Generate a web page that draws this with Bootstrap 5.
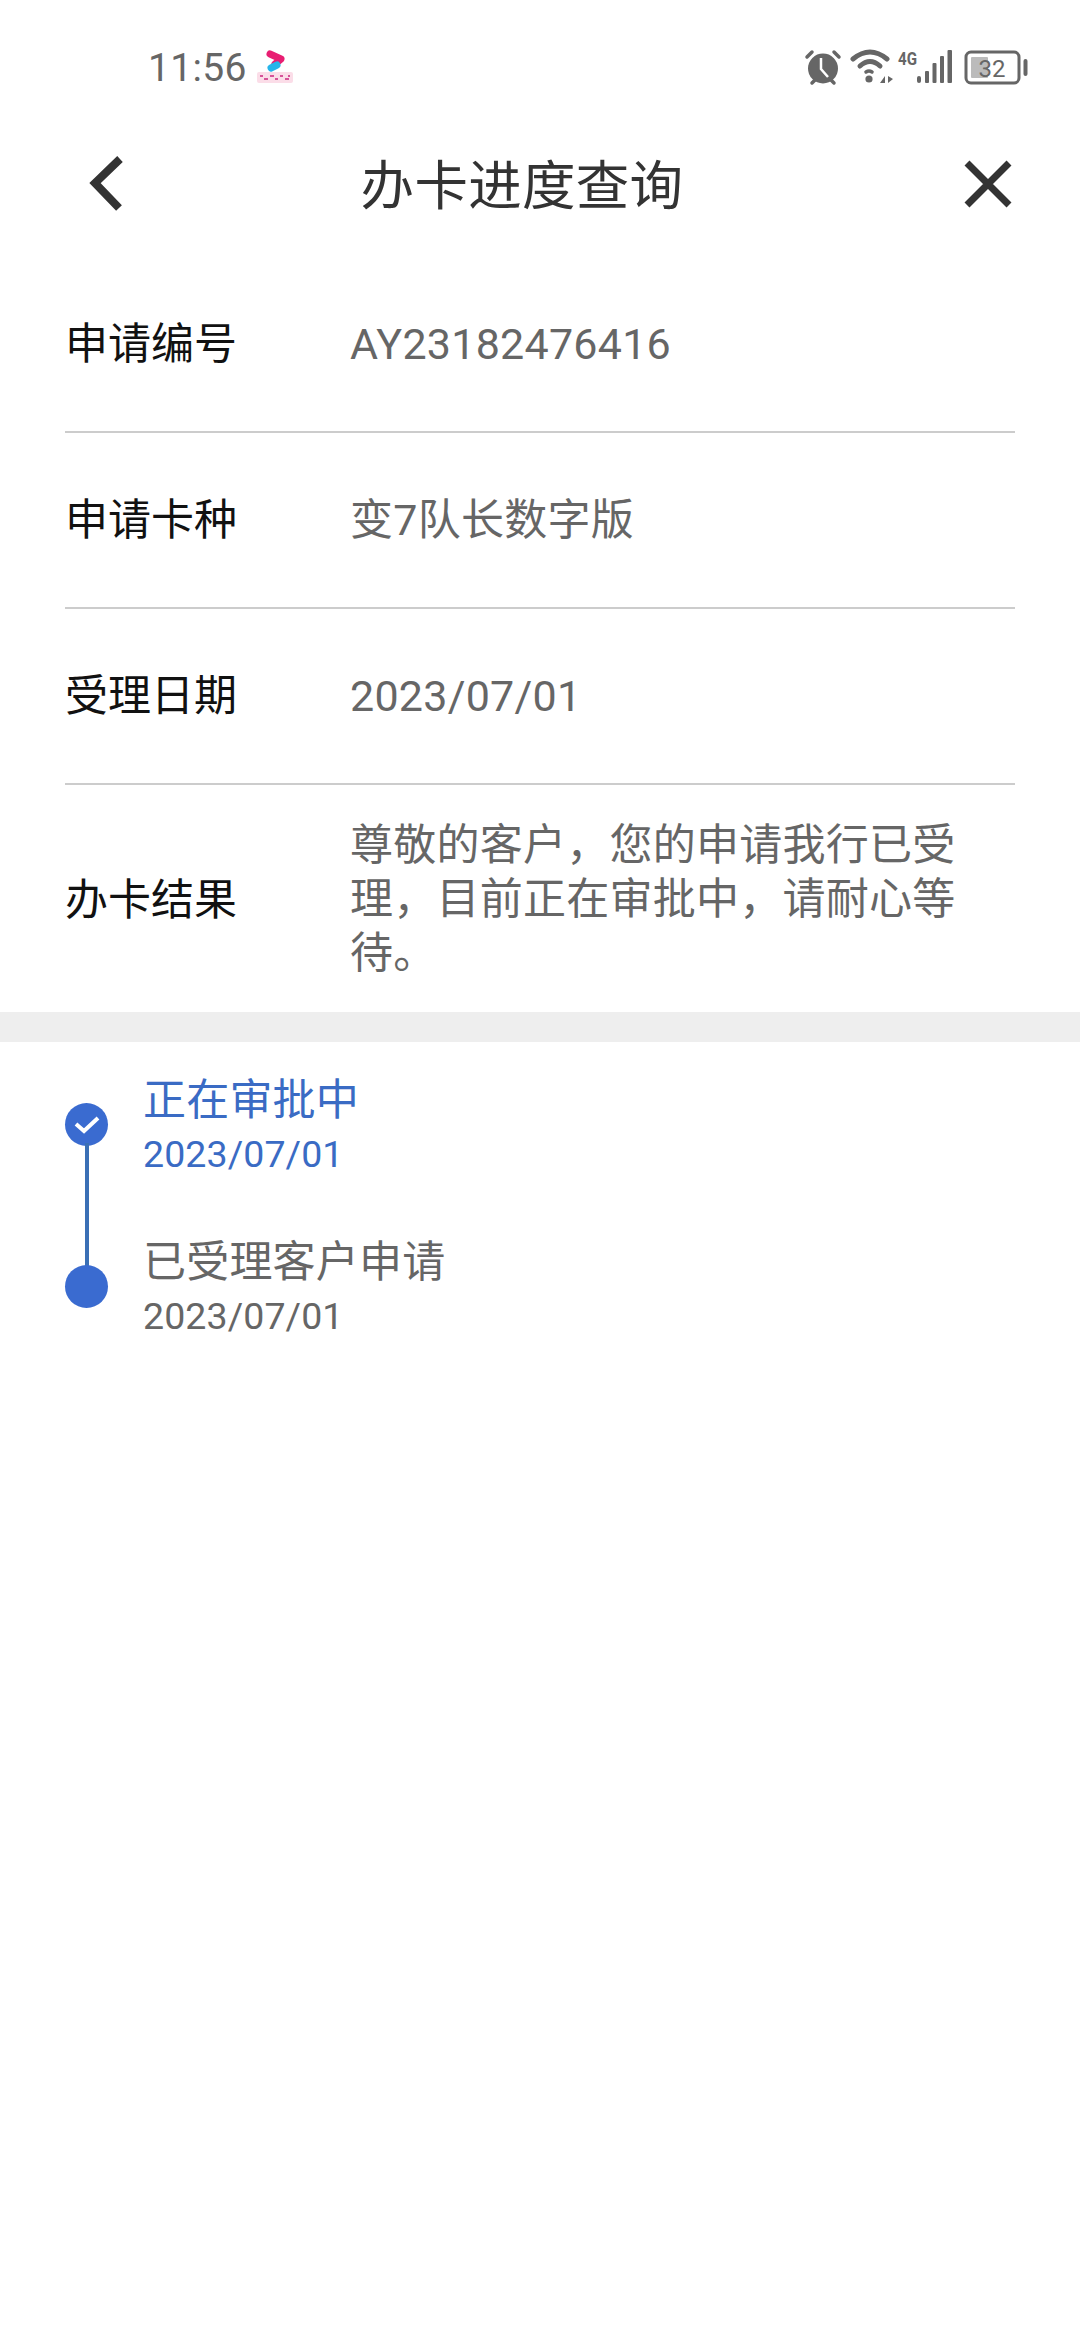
<!DOCTYPE html>
<html lang="zh-CN">
<head>
<meta charset="UTF-8" />
<meta name="viewport" content="width=device-width, initial-scale=1.0" />
<title>办卡进度查询</title>
<link href="https://cdn.jsdelivr.net/npm/bootstrap@5.3.0/dist/css/bootstrap.min.css" rel="stylesheet" />
<style>
  body {
    width: 1080px;
    min-height: 2340px;
    background: #fff;
    font-family: Roboto, "Noto Sans CJK SC", sans-serif;
  }
  .status-bar { height: 108px; padding: 26px 52px 0 148px; color: #666; }
  .status-time { width: 108px; font-size: 39px; letter-spacing: .3px; line-height: 1; margin-top: 2px; }
  .top-nav { height: 149px; padding: 2px 68px 0 88px; }
  .nav-title { font-size: 53.5px; color: #333; line-height: 1; letter-spacing: .3px; margin-right: 48px; padding-top: 6px; }
  .info-list { padding: 0 65px; }
  .info-row { height: 176px; border-bottom: 2px solid #ccc; }
  .info-row:last-child { height: 227px; border-bottom: 0; }
  .info-row:last-child .info-label { padding-top: 4px; }
  .info-label { width: 285px; flex: none; font-size: 43px; color: #111; }
  .info-value { font-size: 43px; color: #666; line-height: 54px; width: 620px; letter-spacing: .25px; }
  .gap-band { height: 30px; background: #eee; }
  .steps { padding: 31px 0 0 65px; }
  .step-item { height: 162px; gap: 35px; position: relative; }
  .step-dot { width: 43px; height: 43px; flex: none; margin-top: 30px; border-radius: 50%; background: #3a6bd0; }
  .step-line { position: absolute; left: 20px; top: 70px; width: 4px; height: 130px; background: #3a6fb5; }
  .step-title { font-size: 43px; line-height: 54px; color: #666; letter-spacing: .2px; }
  .step-date { font-size: 37.5px; line-height: 54px; color: #666; letter-spacing: .1px; }
  .step-active .step-title, .step-active .step-date { color: #3a6bc4; }
</style>
</head>
<body>

<div class="status-bar d-flex justify-content-between align-items-center">
  <div class="d-flex align-items-center">
    <span class="status-time">11:56</span>
    <svg width="38" height="36" viewBox="0 0 38 36">
      <path d="M14 5L25 10L19 15" fill="none" stroke="#e81e72" stroke-width="7" stroke-linejoin="round" stroke-linecap="round" />
      <path d="M15 19L21 16" fill="none" stroke="#26b5ea" stroke-width="7" stroke-linecap="round" />
      <rect x="1" y="23" width="36" height="11" rx="2" fill="#fbdde8" />
      <path d="M4 27h3M8 30h4M14 27h4M19 30h3M24 27h3M29 30h4M32 27h2" stroke="#d6539a" stroke-width="2" />
    </svg>
  </div>
  <div class="d-flex align-items-center">
    <svg width="225" height="48" viewBox="803 42 225 48">
      <circle cx="823" cy="67.500" r="15" fill="#666" />
      <path d="M807 56l5-5M839 56l-5-5M812 82l3-3M834 82l-3-3" stroke="#666" stroke-width="3.500" fill="none" stroke-linecap="round" />
      <path d="M821 57v11l7 8" stroke="#fff" stroke-width="2.500" fill="none" />
      <g fill="none" stroke="#666" stroke-width="5" stroke-linecap="round">
        <path d="M853 58Q870 44 887 58" />
        <path d="M860 65Q870 56 880 65" />
        <path d="M866 71Q869 69 872 71" stroke-width="3.500" />
      </g>
      <circle cx="869" cy="78" r="3.600" fill="#666" />
      <path d="M880 82l5-7v7zM888 75v7l5-4z" fill="#666" />
      <text x="898" y="64" font-family="Roboto" font-size="19" font-weight="700" fill="#666" textLength="19" lengthAdjust="spacingAndGlyphs">4G</text>
      <g fill="#666">
        <rect x="917" y="75" width="4" height="7" rx="2" />
        <rect x="925" y="70" width="4" height="12" rx="1" />
        <rect x="932.500" y="62" width="4" height="20" rx="1" />
        <rect x="940" y="55" width="4" height="27" rx="1" />
        <rect x="947.500" y="49" width="4.500" height="33" rx="1" />
      </g>
      <rect x="966" y="51" width="53" height="31" rx="5" fill="none" stroke="#666" stroke-width="3" />
      <rect x="971" y="56" width="17" height="21" rx="1" fill="#bbb" />
      <text x="992" y="75.500" text-anchor="middle" font-family="Roboto" font-size="24" fill="#666">32</text>
      <rect x="1023.500" y="58" width="4" height="17" rx="2" fill="#666" />
    </svg>
  </div>
</div>

<div class="top-nav d-flex justify-content-between align-items-center">
  <svg width="40" height="60" viewBox="0 0 40 60"><path d="M32 5 L7 29 L31 54" fill="none" stroke="#333" stroke-width="8" /></svg>
  <span class="nav-title">办卡进度查询</span>
  <svg width="48" height="48" viewBox="0 0 48 48"><path d="M3 3L45 45M45 3L3 45" fill="none" stroke="#333" stroke-width="7" /></svg>
</div>

<div class="info-list">
  <div class="info-row d-flex align-items-center"><div class="info-label">申请编号</div><div class="info-value">AY23182476416</div></div>
  <div class="info-row d-flex align-items-center"><div class="info-label">申请卡种</div><div class="info-value">变7队长数字版</div></div>
  <div class="info-row d-flex align-items-center"><div class="info-label">受理日期</div><div class="info-value">2023/07/01</div></div>
  <div class="info-row d-flex align-items-center"><div class="info-label">办卡结果</div><div class="info-value">尊敬的客户，您的申请我行已受理，目前正在审批中，请耐心等待。</div></div>
</div>

<div class="gap-band"></div>

<div class="steps">
  <div class="step-item step-active d-flex">
    <div class="step-dot d-flex align-items-center justify-content-center">
      <svg width="28" height="22" viewBox="0 0 28 22"><path d="M3 10L11 17L25 4" fill="none" stroke="#fff" stroke-width="4" /></svg>
    </div>
    <span class="step-line"></span>
    <div>
      <div class="step-title">正在审批中</div>
      <div class="step-date">2023/07/01</div>
    </div>
  </div>
  <div class="step-item d-flex">
    <div class="step-dot"></div>
    <div>
      <div class="step-title">已受理客户申请</div>
      <div class="step-date">2023/07/01</div>
    </div>
  </div>
</div>

<script src="https://cdn.jsdelivr.net/npm/bootstrap@5.3.0/dist/js/bootstrap.bundle.min.js"></script>
</body>
</html>
